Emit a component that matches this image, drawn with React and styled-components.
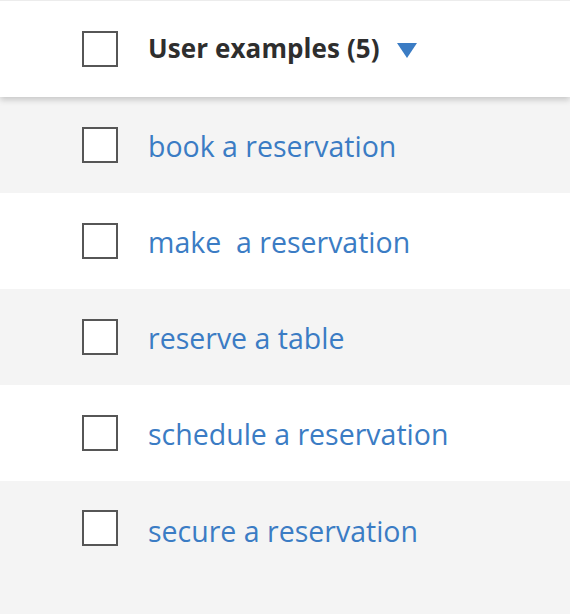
import styled, { createGlobalStyle } from "styled-components";

const GlobalStyle = createGlobalStyle`
  html, body {
    margin: 0;
    padding: 0;
    background: #f4f4f4;
    font-family: "Open Sans", "Liberation Sans", sans-serif;
  }
`;

const examples = [
  "book a reservation",
  "make  a reservation",
  "reserve a table",
  "schedule a reservation",
  "secure a reservation",
];

const App = () => {
  return (
    <>
      <GlobalStyle />
      <Panel>
        <Header>
          <Box />
          <Title>User examples (5)</Title>
          <Caret viewBox="0 0 20 15">
            <path d="M0 0 L20 0 L10 15 Z" fill="#3b7cc4" />
          </Caret>
        </Header>
        {examples.map((text, i) => (
          <Row key={i} $shaded={i % 2 === 0} $last={i === examples.length - 1}>
            <Box />
            <Label>{text}</Label>
          </Row>
        ))}
      </Panel>
    </>
  );
};

const Panel = styled.section`
  width: 570px;
  height: 614px;
  display: flex;
  flex-direction: column;
  background: #f4f4f4;
  overflow: hidden;
`;

const Header = styled.div`
  position: relative;
  z-index: 1;
  height: 96px;
  border-top: 1px solid #ececec;
  background: #fff;
  display: flex;
  align-items: center;
  padding-left: 82px;
  box-shadow: 0 3px 6px rgba(0, 0, 0, 0.18);
  flex-shrink: 0;
`;

const Box = styled.span`
  width: 32px;
  height: 32px;
  border: 2px solid #565656;
  background: #fff;
  flex-shrink: 0;
  margin-right: 30px;
`;

const Title = styled.span`
  font-size: 26px;
  font-weight: 700;
  color: #2e2e2e;
  letter-spacing: 0.1px;
  margin-top: -2px;
`;

const Caret = styled.svg`
  width: 20px;
  height: 15px;
  margin-left: 17px;
  margin-top: 2px;
`;

const Row = styled.div`
  height: ${(p) => (p.$last ? "auto" : "96px")};
  flex: ${(p) => (p.$last ? "1" : "none")};
  background: ${(p) => (p.$shaded ? "#f4f4f4" : "#fff")};
  display: flex;
  align-items: ${(p) => (p.$last ? "flex-start" : "center")};
  padding-left: 82px;
  padding-top: ${(p) => (p.$last ? "29px" : "0")};
  box-sizing: border-box;
`;

const Label = styled.span`
  font-size: 28.5px;
  color: #3b7cc4;
  line-height: 38px;
  white-space: pre;
  margin-top: 2px;
`;

export default App;
